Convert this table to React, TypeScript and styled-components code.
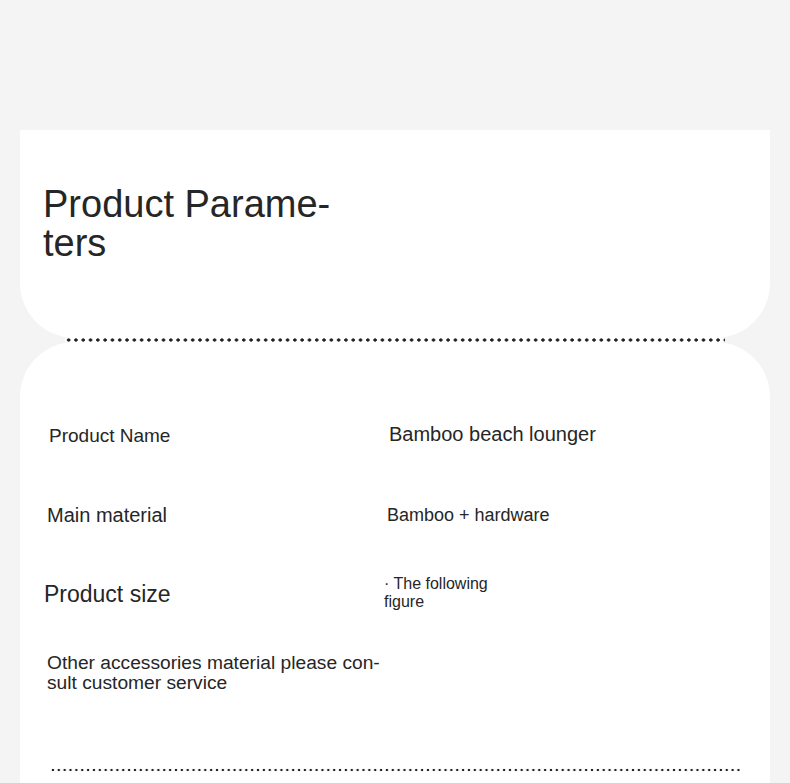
import React from "react";
import styled, { createGlobalStyle } from "styled-components";

const GlobalStyle = createGlobalStyle`
  body {
    margin: 0;
    background: #f4f4f4;
    font-family: "Liberation Sans", Arial, sans-serif;
    color: #262626;
  }
`;

const Page = styled.div`
  padding: 130px 20px 0;
`;

const HeaderCard = styled.section`
  background: #fff;
  height: 208px;
  box-sizing: border-box;
  padding: 55px 0 0 23px;
  border-radius: 0 0 55px 55px;
`;

const Title = styled.h1`
  margin: 0;
  width: 300px;
  font-size: 38px;
  line-height: 39px;
  font-weight: 400;
  hyphens: manual;
`;

const Dots = styled.div<{ $pitch: number; $dot: number; $inset: number }>`
  height: ${(p) => Math.ceil(p.$dot) + 1}px;
  margin: 0 ${(p) => p.$inset}px;
  background-color: #fff;
  background-image: radial-gradient(
    circle,
    #222 ${(p) => p.$dot / 2 - 0.1}px,
    transparent ${(p) => p.$dot / 2 + 0.4}px
  );
  background-size: ${(p) => p.$pitch}px ${(p) => Math.ceil(p.$dot) + 1}px;
  background-repeat: repeat-x;
`;

const BodyCard = styled.section`
  background: #fff;
  border-radius: 55px 55px 0 0;
  padding: 54px 0 48px;
`;

const Rows = styled.div`
  display: flex;
  flex-direction: column;
  padding-left: 27px;
`;

const Row = styled.div<{ $shift: number }>`
  height: 79px;
  display: flex;
  align-items: center;
  margin-left: ${(p) => p.$shift}px;
`;

const Label = styled.div<{ $size: number }>`
  width: 340px;
  flex-shrink: 0;
  font-size: ${(p) => p.$size}px;
  line-height: 20px;
  hyphens: manual;
`;

const Value = styled.div<{ $size: number; $width?: number; $lift?: number }>`
  font-size: ${(p) => p.$size}px;
  line-height: 18px;
  margin-bottom: ${(p) => p.$lift ?? 0}px;
  ${(p) => (p.$width ? `width: ${p.$width}px;` : "")}
`;

const BottomRule = styled(Dots)`
  margin-top: 56px;
`;

const params = [
  { label: "Product Name", labelSize: 19, value: "Bamboo beach lounger", valueSize: 20, shift: 2, lift: 4 },
  { label: "Main material", labelSize: 20, value: "Bamboo + hardware", valueSize: 18, shift: 0, lift: 0 },
  { label: "Product size", labelSize: 23, value: "· The following figure", valueSize: 16, shift: -3, lift: 2, width: 120 },
];

export default function App() {
  return (
    <Page lang="en">
      <GlobalStyle />
      <HeaderCard>
        <Title>Product Parame{"\u00AD"}ters</Title>
      </HeaderCard>
      <Dots $pitch={7.3} $dot={3} $inset={45} />
      <BodyCard>
        <Rows>
          {params.map((p) => (
            <Row key={p.label} $shift={p.shift}>
              <Label $size={p.labelSize}>{p.label}</Label>
              <Value $size={p.valueSize} $width={p.width} $lift={p.lift}>
                {p.value}
              </Value>
            </Row>
          ))}
          <Row $shift={0}>
            <Label $size={19.2}>
              Other accessories material please con{"\u00AD"}sult customer service
            </Label>
          </Row>
        </Rows>
        <BottomRule $pitch={5.87} $dot={2.4} $inset={30} />
      </BodyCard>
    </Page>
  );
}
